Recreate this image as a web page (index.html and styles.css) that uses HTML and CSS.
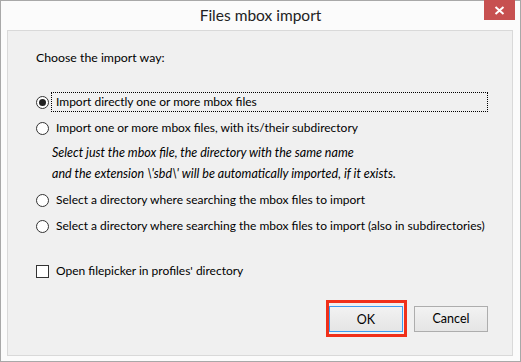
FILE: index.html
```html
<!DOCTYPE html>
<html lang="en">
  <head>
    <meta charset="UTF-8" />
    <title>Files mbox import</title>
    <link rel="stylesheet" href="styles.css">
  </head>
  <body>
    <div class="window">
      <div class="title-bar">
        <span class="title">Files mbox import</span>
        <span class="close-btn">
          <svg width="11" height="9" viewBox="0 0 11 9">
            <path d="M1.5 1 L9.5 8 M9.5 1 L1.5 8" stroke="#fff" stroke-width="2" />
          </svg>
        </span>
      </div>

      <div class="panel">
        <div class="heading">Choose the import way:</div>

        <label class="option option-first">
          <span class="radio checked"></span>
          <span class="option-text focused">Import directly one or more mbox files</span>
        </label>
        <label class="option">
          <span class="radio"></span>
          <span class="option-text">Import one or more mbox files, with its/their subdirectory</span>
        </label>
        <div class="note">
          Select just the mbox file, the directory with the same name<br />
          and the extension \'sbd\' will be automatically imported, if it exists.
        </div>
        <label class="option">
          <span class="radio"></span>
          <span class="option-text">Select a directory where searching the mbox files to import</span>
        </label>
        <label class="option">
          <span class="radio"></span>
          <span class="option-text">Select a directory where searching the mbox files to import (also in subdirectories)</span>
        </label>

        <label class="option option-check">
          <span class="checkbox"></span>
          <span class="option-text">Open filepicker in profiles' directory</span>
        </label>

        <div class="buttons">
          <span class="highlight">
            <button class="btn btn-default">OK</button>
          </span>
          <button class="btn">Cancel</button>
        </div>
      </div>
    </div>
  </body>
</html>
```

FILE: styles.css
```css
body {
  margin: 0;
  font-family: Lato, "Noto Sans", sans-serif;
  font-size: 12px;
  color: #000;
}

.window {
  width: 521px;
  height: 362px;
  box-sizing: border-box;
  border: 1px solid #a8a8a8;
  background-color: #fbfbfb;
  display: flex;
  flex-direction: column;
}

.title-bar {
  position: relative;
  height: 29px;
  display: flex;
  align-items: center;
  justify-content: center;
}

.title {
  font-size: 15.5px;
  color: #222;
  margin-top: -1px;
}

.close-btn {
  position: absolute;
  top: -1px;
  right: 5px;
  width: 31px;
  height: 20px;
  background-color: #c75050;
  display: flex;
  align-items: center;
  justify-content: center;
}

.panel {
  flex: 1;
  margin: 0 7px 5px 6px;
  border: 1px solid #d9d9d9;
  background-color: #f0f0f0;
  padding: 17px 24px 18px 28px;
  display: flex;
  flex-direction: column;
}

.heading {
  line-height: 20px;
  font-size: 12.3px;
}

.option {
  display: flex;
  align-items: center;
  height: 20px;
  margin-top: 6px;
  white-space: nowrap;
}

.option-first {
  margin-top: 24px;
}

.option-check {
  margin-top: 25px;
}

.radio,
.checkbox {
  width: 13px;
  height: 13px;
  box-sizing: border-box;
  border: 1px solid #333;
  background-color: #fff;
  flex-shrink: 0;
  display: flex;
  align-items: center;
  justify-content: center;
}

.radio {
  border-radius: 50%;
}

.radio.checked::after {
  content: "";
  width: 7px;
  height: 7px;
  border-radius: 50%;
  background-color: #222;
}

.option-text {
  margin-left: 2px;
  padding: 0 4px;
  line-height: 18px;
  border: 1px dotted transparent;
}

.option-text.focused {
  flex: 1;
  border-color: #000;
}

.note {
  margin: 4px 0 0 16px;
  font-style: italic;
  font-size: 12.5px;
  line-height: 21px;
}

.buttons {
  margin-top: auto;
  display: flex;
  justify-content: flex-end;
  align-items: center;
  gap: 7px;
}

.highlight {
  display: flex;
  border: 3px solid #f0301a;
  padding: 3px 1px 0 0;
  height: 28px;
}

.btn {
  width: 74px;
  height: 26px;
  box-sizing: border-box;
  border: 1px solid #adadad;
  background: linear-gradient(#f2f2f2, #e5e5e5);
  font-family: Lato, "Noto Sans", sans-serif;
  font-size: 12.5px;
  color: #000;
  padding: 0;
}

.btn-default {
  border-color: #3c9cf0;
}
```
